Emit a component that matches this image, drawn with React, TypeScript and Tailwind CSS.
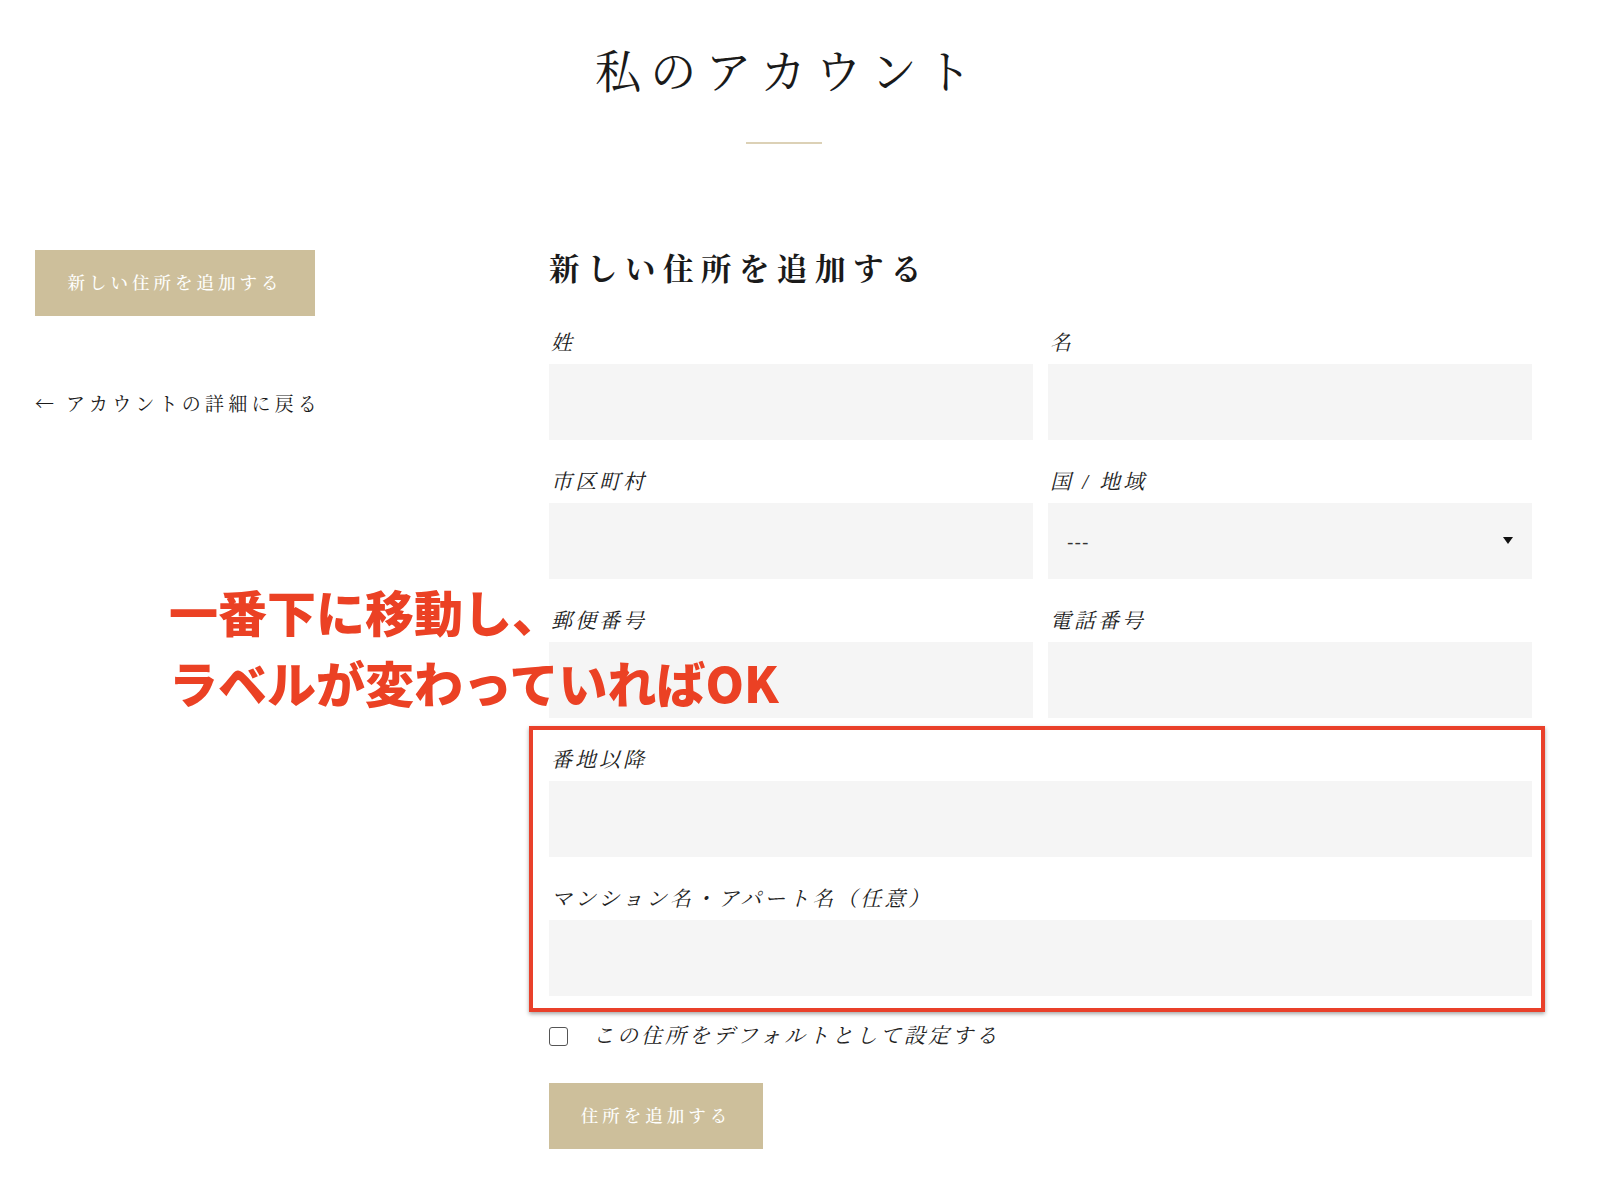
import React from "react";

const serif = "font-['Liberation_Serif','Noto_Serif_CJK_JP','Noto_Sans_CJK_JP',serif]";

const labelClass =
  "text-[21px] italic leading-[24px] tracking-[3px] text-[#222] mb-[9px] pl-[2px]";

const Field = ({ label }: { label: string }) => (
  <div className="flex flex-col">
    <label className={labelClass}>{label}</label>
    <input className="h-[76px] w-full bg-[#f5f5f5] outline-none" />
  </div>
);

export default function App() {
  return (
    <div className={`relative min-h-[1177px] w-full bg-white text-[#1a1a1a] ${serif}`}>
      <div className="flex flex-col items-center pt-[39px] pr-[33px]">
        <h1 className="text-[46px] leading-[68px] tracking-[0.2em] pl-[0.2em] font-normal">私のアカウント</h1>
        <div className="mt-[35px] h-[2px] w-[76px] bg-[#dcd1b6]" />
      </div>

      <div className="flex pl-[35px] pt-[104px]">
        <div className="w-[514px] shrink-0 flex flex-col items-start">
          <button className="mt-[2px] h-[66px] w-[280px] bg-[#cdbf9b] text-[17.5px] font-medium tracking-[4px] text-white">
            新しい住所を追加する
          </button>
          <a href="#" className="mt-[74px] text-[19px] leading-[26px] tracking-[4.2px] text-[#1a1a1a]">
            <span className="font-['Noto_Sans_CJK_JP',sans-serif] font-light tracking-normal mr-[12px]">←</span>
            アカウントの詳細に戻る
          </a>
        </div>

        <div className="w-[983px] flex flex-col">
          <h2 className="text-[30.5px] leading-[44px] tracking-[7.5px] font-bold">新しい住所を追加する</h2>
          <div className="mt-[39px] grid grid-cols-2 gap-x-[15px] gap-y-[30px]">
            <Field label="姓" />
            <Field label="名" />
            <Field label="市区町村" />
            <div className="flex flex-col">
              <label className={labelClass}>国 / 地域</label>
              <div className="relative h-[76px] w-full bg-[#f5f5f5] flex items-center px-[19px]">
                <span className="font-['DejaVu_Sans',sans-serif] text-[18px] tracking-[1px] text-[#333]">---</span>
                <svg className="absolute right-[19px] top-[34px]" width="10" height="7" viewBox="0 0 10 7">
                  <path d="M0 0 L10 0 L5 7 Z" fill="#111" />
                </svg>
              </div>
            </div>
            <Field label="郵便番号" />
            <Field label="電話番号" />
            <div className="col-span-2 relative grid grid-cols-1 gap-y-[30px]">
              <div className="pointer-events-none absolute left-[-20px] top-[-22px] right-[-13px] bottom-[-16px] border-[4px] border-[#e9402a] shadow-[0_2px_4px_rgba(0,0,0,0.35)]" />
              <Field label="番地以降" />
              <Field label="マンション名・アパート名（任意）" />
            </div>
          </div>

          <label className="mt-[28px] flex items-center">
            <span className="h-[19px] w-[19px] rounded-[3px] border-[1.5px] border-[#555] bg-white" />
            <span className="ml-[25px] text-[21px] italic leading-[24px] tracking-[3px] text-[#222]">
              この住所をデフォルトとして設定する
            </span>
          </label>

          <button className="mt-[35px] h-[66px] w-[214px] bg-[#cdbf9b] text-[17.5px] font-medium tracking-[4px] text-white">
            住所を追加する
          </button>
        </div>
      </div>

      <div className="absolute left-[169px] top-[575px] font-['Noto_Sans_CJK_JP',sans-serif] text-[49px] font-black leading-[71px] text-[#eb4124]">
        <div>一番下に移動し、</div>
        <div>ラベルが変わっていればOK</div>
      </div>
    </div>
  );
}
